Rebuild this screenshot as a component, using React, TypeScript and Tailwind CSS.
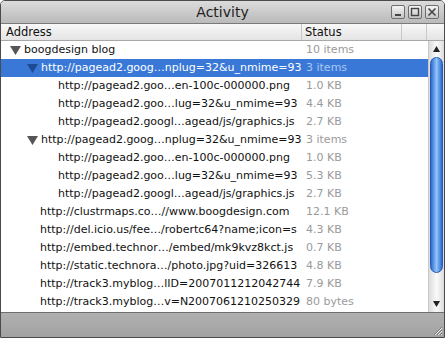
import React from "react";

interface Row {
  level: number;
  label: string;
  status: string;
  expandable?: boolean;
  selected?: boolean;
}

const rows: Row[] = [
  { level: 0, label: "boogdesign blog", status: "10 items", expandable: true },
  { level: 1, label: "http://pagead2.goog…nplug=32&u_nmime=93", status: "3 items", expandable: true, selected: true },
  { level: 2, label: "http://pagead2.goo…en-100c-000000.png", status: "1.0 KB" },
  { level: 2, label: "http://pagead2.goo…lug=32&u_nmime=93", status: "4.4 KB" },
  { level: 2, label: "http://pagead2.googl…agead/js/graphics.js", status: "2.7 KB" },
  { level: 1, label: "http://pagead2.goog…nplug=32&u_nmime=93", status: "3 items", expandable: true },
  { level: 2, label: "http://pagead2.goo…en-100c-000000.png", status: "1.0 KB" },
  { level: 2, label: "http://pagead2.goo…lug=32&u_nmime=93", status: "5.3 KB" },
  { level: 2, label: "http://pagead2.googl…agead/js/graphics.js", status: "2.7 KB" },
  { level: 1, label: "http://clustrmaps.co…//www.boogdesign.com", status: "12.1 KB" },
  { level: 1, label: "http://del.icio.us/fee…/robertc64?name;icon=s", status: "4.3 KB" },
  { level: 1, label: "http://embed.technor…/embed/mk9kvz8kct.js", status: "0.7 KB" },
  { level: 1, label: "http://static.technora…/photo.jpg?uid=326613", status: "4.8 KB" },
  { level: 1, label: "http://track3.myblog…lID=2007011212042744", status: "7.9 KB" },
  { level: 1, label: "http://track3.myblog…v=N2007061210250329", status: "80 bytes" },
];

// padding per level: expandable rows show a triangle before the text
function rowPadding(r: Row) {
  if (r.level === 0) return "pl-[9px]";
  if (r.level === 2) return "pl-[57px]";
  return r.expandable ? "pl-[26px]" : "pl-[39px]";
}

function Disclosure({ selected }: { selected?: boolean }) {
  return (
    <svg width="11" height="10" viewBox="0 0 11 10" className="mr-[3px] shrink-0">
      <polygon points="0,1 11,1 5.5,10" fill={selected ? "#1c4a94" : "#555"} />
    </svg>
  );
}

function WinButton({ kind }: { kind: "min" | "max" | "close" }) {
  return (
    <div className="w-[14px] h-[14px] rounded-[2px] border border-[#6e6e6e] bg-gradient-to-b from-[#f4f4f4] to-[#c4c4c4] flex items-center justify-center">
      <svg width="10" height="10" viewBox="0 0 10 10">
        {kind === "min" && <rect x="2" y="7" width="6" height="2" fill="#444" />}
        {kind === "max" && <rect x="1.5" y="1.5" width="7" height="7" fill="none" stroke="#444" strokeWidth="1.4" />}
        {kind === "close" && (
          <path d="M1.5 1.5 L8.5 8.5 M8.5 1.5 L1.5 8.5" stroke="#444" strokeWidth="1.6" />
        )}
      </svg>
    </div>
  );
}

function Scrollbar() {
  return (
    <div className="w-[16px] shrink-0 flex flex-col border-l border-[#c8c8c8] bg-gradient-to-r from-[#dcdcdc] via-[#fafafa] to-[#dcdcdc]">
      <div className="h-[16px] flex items-center justify-center">
        <svg width="7" height="6" viewBox="0 0 7 6">
          <polygon points="3.5,0 7,6 0,6" fill="#222" />
        </svg>
      </div>
      <div className="h-[216px] mx-[1px] rounded-full border border-[#2a5ab0] bg-gradient-to-r from-[#2c6ad0] via-[#92c4fa] to-[#2c6ad0]" />
      <div className="flex-1" />
      <div className="h-[16px] flex items-center justify-center">
        <svg width="7" height="6" viewBox="0 0 7 6">
          <polygon points="0,0 7,0 3.5,6" fill="#222" />
        </svg>
      </div>
    </div>
  );
}

export default function App() {
  return (
    <div
      className="w-[445px] h-[338px] flex flex-col border border-[#4a4a4a] rounded-t-[5px] overflow-hidden bg-white"
      style={{ fontFamily: '"DejaVu Sans", sans-serif' }}
    >
      {/* Title bar */}
      <div className="h-[23px] shrink-0 grid grid-cols-[1fr_auto_1fr] items-center bg-gradient-to-b from-[#dcdcdc] to-[#bababa] border-b border-[#7a7a7a]">
        <div />
        <div className="text-[14px] text-[#222]">Activity</div>
        <div className="flex justify-end gap-[3px] pr-[5px]">
          <WinButton kind="min" />
          <WinButton kind="max" />
          <WinButton kind="close" />
        </div>
      </div>

      {/* Column header */}
      <div className="h-[17px] shrink-0 flex text-[11.5px] text-[#111] bg-gradient-to-b from-[#f8f8f8] to-[#e4e4e4] border-b border-[#a8a8a8]">
        <div className="w-[301px] pl-[5px] leading-[16px] border-r border-[#c8c8c8]">Address</div>
        <div className="w-[100px] pl-[3px] leading-[16px] border-r border-[#c8c8c8]">Status</div>
        <div className="w-[25px] border-r border-[#c8c8c8]" />
        <div className="flex-1" />
      </div>

      {/* Body */}
      <div className="flex-1 flex min-h-0 border-b border-[#6e6e6e]">
        <div className="flex-1 flex flex-col">
          {rows.map((r, i) => (
            <div
              key={i}
              className={`h-[18px] flex items-center text-[11px] whitespace-nowrap ${
                r.selected ? "bg-[#3a78d8] text-white" : "text-[#111]"
              }`}
            >
              <div className={`w-[302px] flex items-center overflow-hidden ${rowPadding(r)}`}>
                {r.expandable && <Disclosure selected={r.selected} />}
                <span>{r.label}</span>
              </div>
              <span className={`pl-[3px] ${r.selected ? "text-[#a9c8f2]" : "text-[#9a9a9a]"}`}>{r.status}</span>
            </div>
          ))}
        </div>
        <Scrollbar />
      </div>

      {/* Bottom bar */}
      <div className="h-[24px] shrink-0 flex items-end justify-end bg-gradient-to-b from-[#b0b0b0] to-[#a2a2a2]">
        <svg width="12" height="12" viewBox="0 0 12 12" className="mr-[1px] mb-[1px]">
          <path d="M11 3 L3 11 M11 6 L6 11 M11 9 L9 11" stroke="#777" strokeWidth="1" />
          <path d="M11 4 L4 11 M11 7 L7 11 M11 10 L10 11" stroke="#eee" strokeWidth="1" />
        </svg>
      </div>
    </div>
  );
}
